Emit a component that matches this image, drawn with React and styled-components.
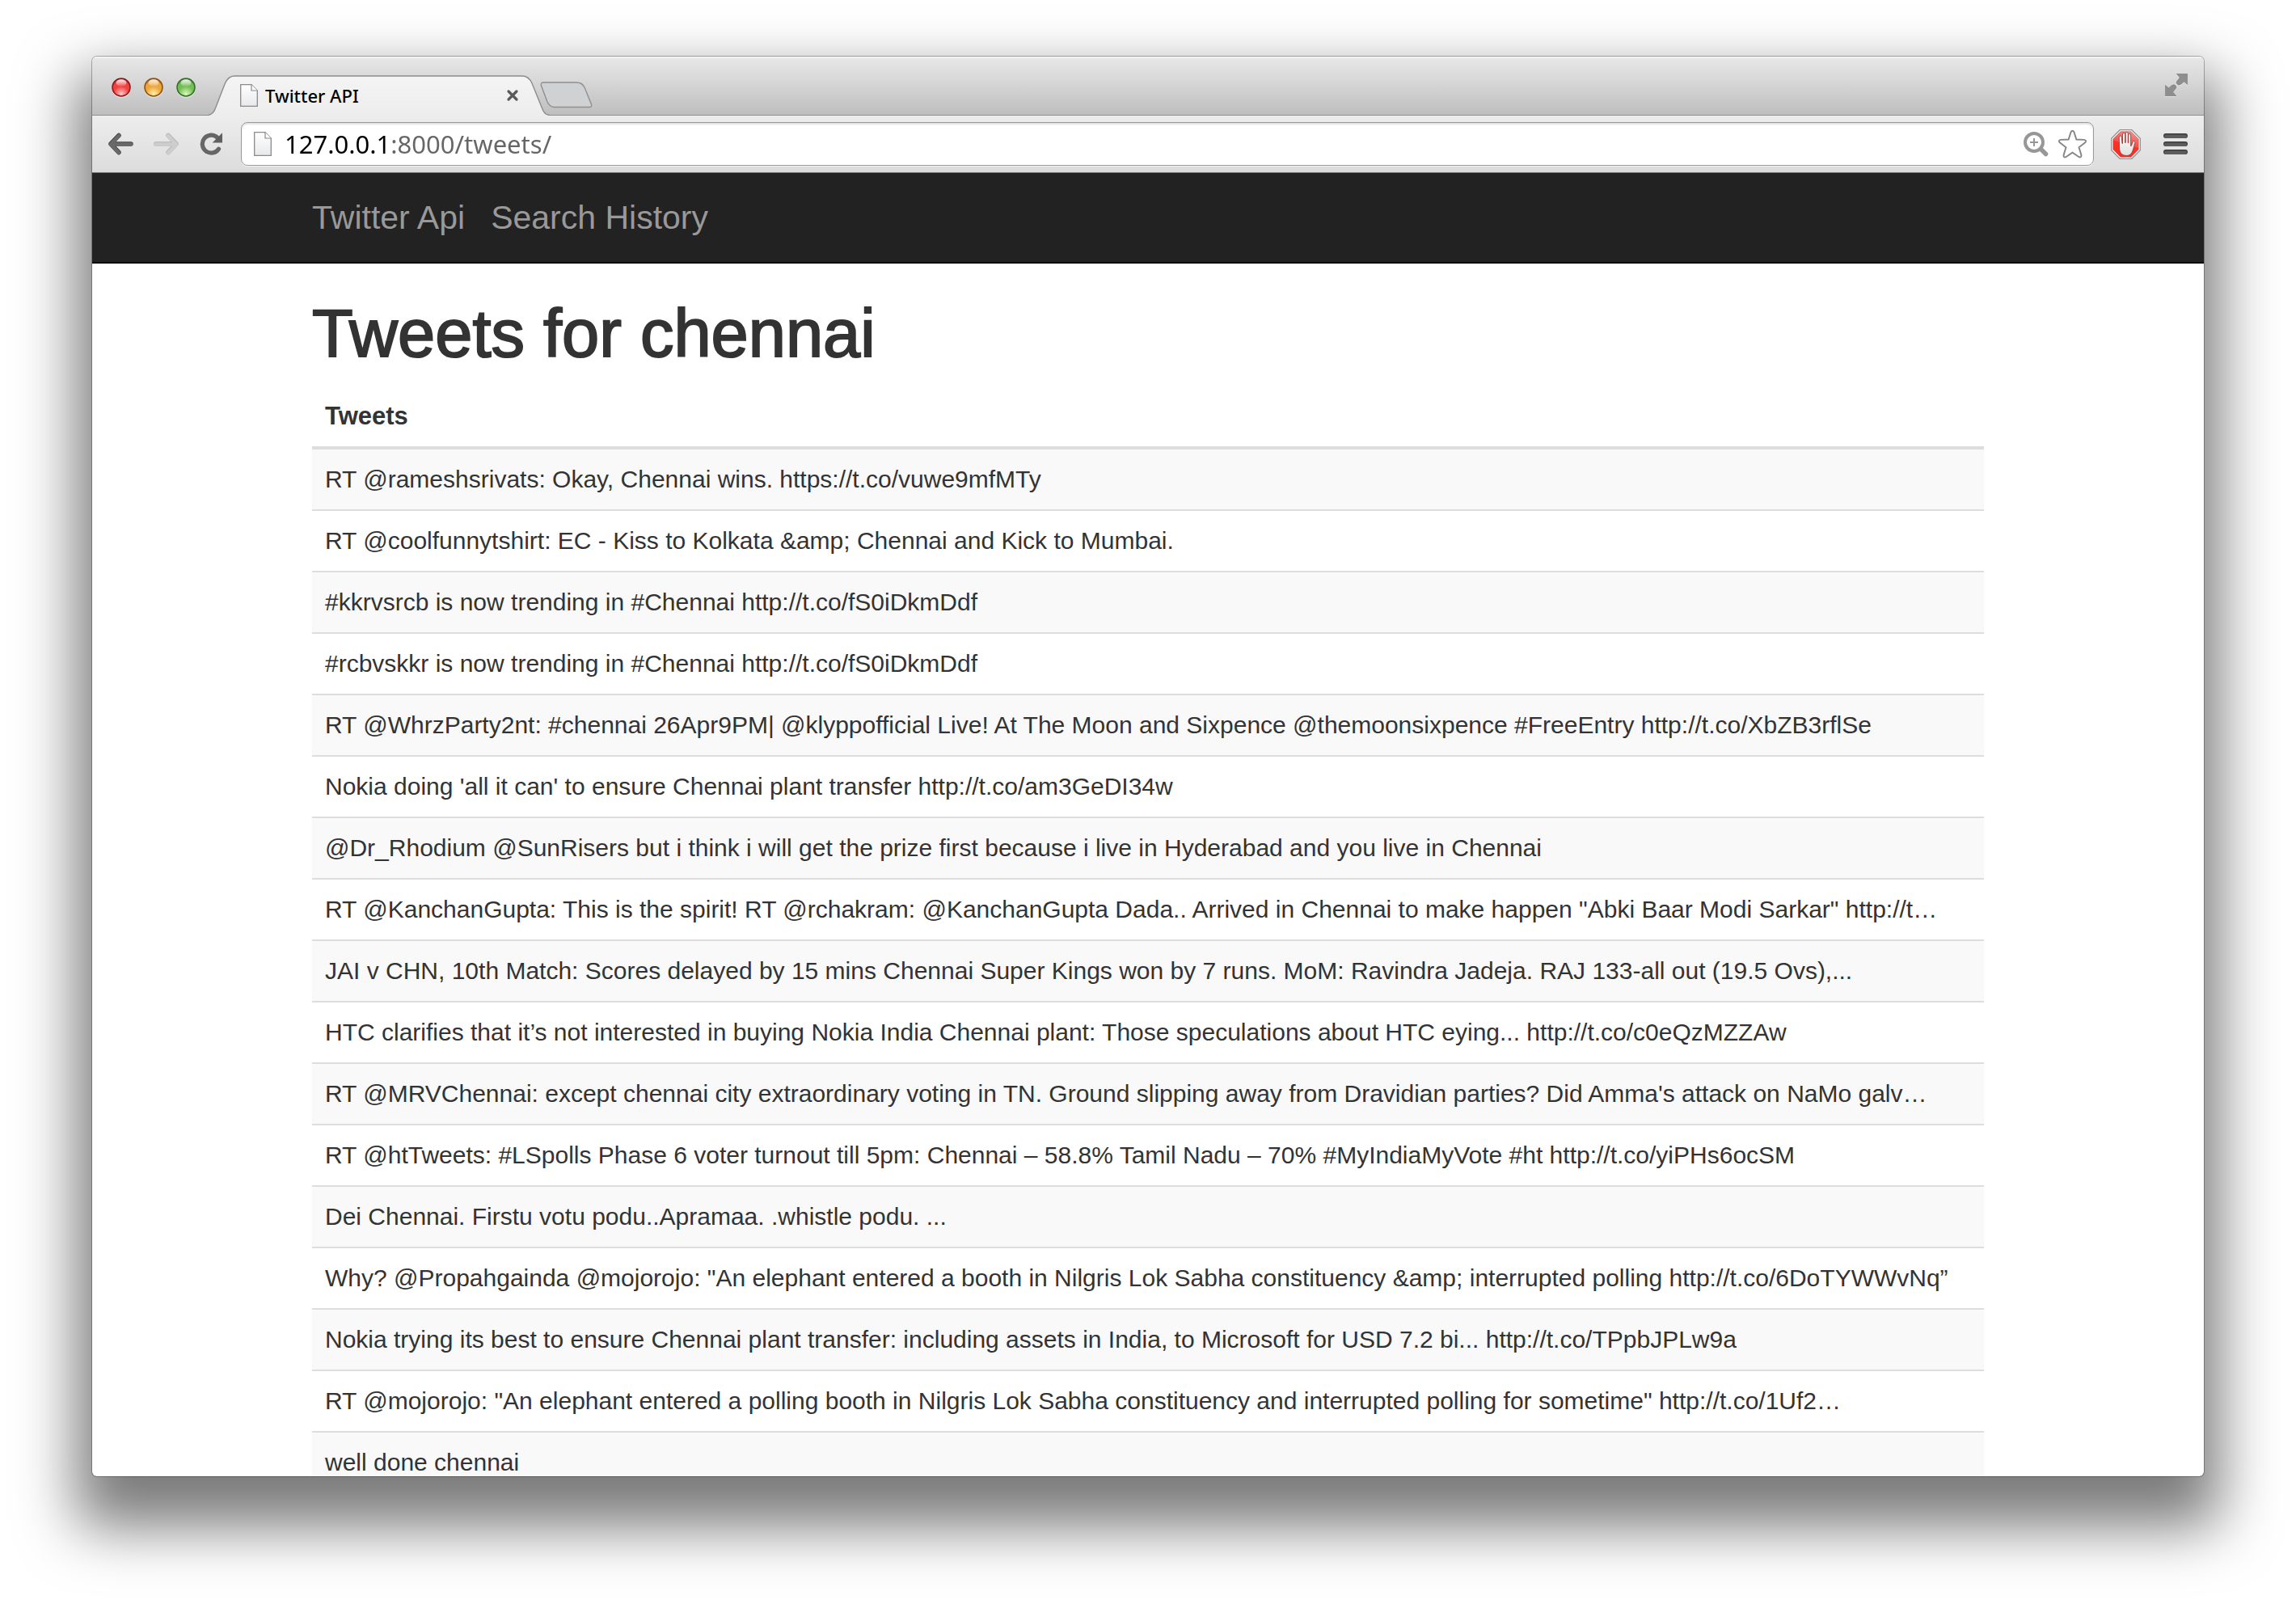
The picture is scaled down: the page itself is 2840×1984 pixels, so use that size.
import React from 'react';
import styled, { createGlobalStyle } from 'styled-components';

const GlobalStyle = createGlobalStyle`
  *, *::before, *::after { box-sizing: border-box; }
  body { margin: 0; background: #fff; }
  svg { display: block; }
`;

const sans = '"Helvetica Neue", "Liberation Sans", Arial, sans-serif';
const chromeFont = '"Noto Sans", "Open Sans", sans-serif';

const Desktop = styled.div`
  display: flex;
  height: 100vh;
  padding: 70px 114px 158px;
`;

const BrowserWindow = styled.div`
  flex: 1;
  min-width: 0;
  display: flex;
  flex-direction: column;
  overflow: hidden;
  border-radius: 6px;
  background: #fff;
  box-shadow: 0 0 0 1px rgba(0, 0, 0, 0.28), 0 43px 72px 20px rgba(0, 0, 0, 0.52);
`;

const TabStrip = styled.div`
  display: flex;
  align-items: flex-end;
  height: 73px;
  padding: 0 20px 0 24px;
  border-bottom: 1px solid #8f8f8f;
  background: linear-gradient(#e8e8e8, #d4d4d4 50%, #bebebe);
  box-shadow: inset 0 2px 0 #f2f2f2;
`;

const WindowButtons = styled.div`
  display: flex;
  gap: 16px;
  margin: 0 16px 20px 0;
`;

const IconButton = styled.button`
  display: flex;
  align-items: center;
  justify-content: center;
  padding: 0;
  border: 0;
  background: none;
`;

const Tab = styled.div`
  position: relative;
  display: flex;
  align-items: center;
  width: 422px;
  height: 50px;
  margin-bottom: -1px;
  padding: 0 38px 0 39px;
`;

const TabShape = styled.svg`
  position: absolute;
  inset: 0;
`;

const TabTitle = styled.span`
  position: relative;
  flex: 1;
  margin-left: 9px;
  font: 500 22px/32px ${chromeFont};
  color: #000;
`;

const TabIcon = styled.span`
  position: relative;
`;

const NewTab = styled(IconButton)`
  margin: 0 0 8px -12px;
`;

const FullScreen = styled(IconButton)`
  margin: 0 0 22px auto;
`;

const Toolbar = styled.div`
  display: flex;
  align-items: center;
  height: 71px;
  padding: 0 20px;
  border-bottom: 1px solid #777;
  background: linear-gradient(#ededed, #dcdcdc);
`;

const NavButtons = styled.div`
  display: flex;
  gap: 24px;
  margin-right: 20px;
`;

const AddressBar = styled.form`
  flex: 1;
  display: flex;
  align-items: center;
  height: 54px;
  padding: 0 8px 0 15px;
  border: 1px solid #9a9a9a;
  border-radius: 8px;
  background: #fff;
  box-shadow: inset 0 2px 2px rgba(0, 0, 0, 0.12), 0 1px 0 #f4f4f4;
`;

const AddressInput = styled.input`
  flex: 1;
  min-width: 0;
  height: 44px;
  margin-left: 16px;
  padding: 0;
  border: 0;
  outline: 0;
  font: 31px/44px ${chromeFont};
  background: linear-gradient(90deg, #000 132px, #666 132px);
  background-clip: text;
  -webkit-text-fill-color: transparent;
`;

const AddressActions = styled.div`
  display: flex;
  align-items: center;
  gap: 12px;
`;

const Extensions = styled.div`
  display: flex;
  align-items: center;
  gap: 28px;
  margin-left: 21px;
`;

const Page = styled.div`
  flex: 1;
  min-height: 0;
  overflow: hidden;
  font-family: ${sans};
  color: #333;
`;

const Navbar = styled.nav`
  height: 112px;
  padding: 0 272px;
  display: flex;
  align-items: center;
  gap: 32px;
  border-bottom: 2px solid #080808;
  background: #222;
`;

const NavLink = styled.a`
  font-size: 41px;
  line-height: 44px;
  color: #999;
  text-decoration: none;
`;

const Content = styled.main`
  padding: 0 272px;
`;

const Title = styled.h1`
  margin: 0;
  padding: 43px 0 21px;
  font-size: 83px;
  line-height: 88px;
  font-weight: 400;
  -webkit-text-stroke: 2px #333;
`;

const TweetTable = styled.table`
  width: 100%;
  border-collapse: separate;
  border-spacing: 0;
  font-size: 30px;
  line-height: 42px;
`;

const HeaderCell = styled.th`
  padding: 16px;
  border-bottom: 4px solid #ddd;
  text-align: left;
  font-size: 31px;
  font-weight: 700;
`;

const TweetRow = styled.tr`
  &:nth-child(odd) { background: #f9f9f9; }
`;

const TweetCell = styled.td`
  padding: 16px;
  border-bottom: 2px solid #ddd;
`;

const tweets = [
  'RT @rameshsrivats: Okay, Chennai wins. https://t.co/vuwe9mfMTy',
  'RT @coolfunnytshirt: EC - Kiss to Kolkata &amp; Chennai and Kick to Mumbai.',
  '#kkrvsrcb is now trending in #Chennai http://t.co/fS0iDkmDdf',
  '#rcbvskkr is now trending in #Chennai http://t.co/fS0iDkmDdf',
  'RT @WhrzParty2nt: #chennai 26Apr9PM| @klyppofficial Live! At The Moon and Sixpence @themoonsixpence #FreeEntry http://t.co/XbZB3rflSe',
  "Nokia doing 'all it can' to ensure Chennai plant transfer http://t.co/am3GeDI34w",
  '@Dr_Rhodium @SunRisers but i think i will get the prize first because i live in Hyderabad and you live in Chennai',
  'RT @KanchanGupta: This is the spirit! RT @rchakram: @KanchanGupta Dada.. Arrived in Chennai to make happen "Abki Baar Modi Sarkar" http://t…',
  'JAI v CHN, 10th Match: Scores delayed by 15 mins Chennai Super Kings won by 7 runs. MoM: Ravindra Jadeja. RAJ 133-all out (19.5 Ovs),...',
  'HTC clarifies that it’s not interested in buying Nokia India Chennai plant: Those speculations about HTC eying... http://t.co/c0eQzMZZAw',
  "RT @MRVChennai: except chennai city extraordinary voting in TN. Ground slipping away from Dravidian parties? Did Amma's attack on NaMo galv…",
  'RT @htTweets: #LSpolls Phase 6 voter turnout till 5pm: Chennai – 58.8% Tamil Nadu – 70% #MyIndiaMyVote #ht http://t.co/yiPHs6ocSM',
  'Dei Chennai. Firstu votu podu..Apramaa. .whistle podu. ...',
  'Why? @Propahgainda @mojorojo: "An elephant entered a booth in Nilgris Lok Sabha constituency &amp; interrupted polling http://t.co/6DoTYWWvNq”',
  'Nokia trying its best to ensure Chennai plant transfer: including assets in India, to Microsoft for USD 7.2 bi... http://t.co/TPpbJPLw9a',
  'RT @mojorojo: "An elephant entered a polling booth in Nilgris Lok Sabha constituency and interrupted polling for sometime" http://t.co/1Uf2…',
  'well done chennai',
];

const lights = [
  { name: 'Close window', edge: '#8e1a1c', mid: '#f0403f', glow: '#ffc9c9' },
  { name: 'Minimize window', edge: '#8f5410', mid: '#eda53c', glow: '#fff3ab' },
  { name: 'Zoom window', edge: '#35702a', mid: '#74bd55', glow: '#dcf8bd' },
];

function Light({ name, edge, mid, glow }) {
  const id = name.split(' ')[0];
  return (
    <IconButton type="button" aria-label={name}>
      <svg width="24" height="26" viewBox="0 0 24 26">
        <defs>
          <radialGradient id={id} cx="0.5" cy="0.88" r="0.88">
            <stop offset="0" stopColor={glow} />
            <stop offset="0.5" stopColor={mid} />
            <stop offset="0.75" stopColor={mid} />
            <stop offset="1" stopColor={edge} />
          </radialGradient>
          <linearGradient id={id + 'Shine'} x1="0" y1="0" x2="0" y2="1">
            <stop offset="0" stopColor="#fff" stopOpacity="0.95" />
            <stop offset="1" stopColor="#fff" stopOpacity="0.1" />
          </linearGradient>
        </defs>
        <circle cx="12" cy="13" r="12" fill="#fff" opacity="0.45" />
        <circle cx="12" cy="12" r="11" fill={`url(#${id})`} stroke={edge} strokeWidth="1.6" />
        <ellipse cx="12" cy="6.5" rx="6.5" ry="4.2" fill={`url(#${id}Shine)`} />
      </svg>
    </IconButton>
  );
}

function PageIcon({ height }) {
  return (
    <svg width="22" height={height} viewBox={`0 0 22 ${height}`}>
      <defs>
        <linearGradient id="sheet" x1="0" y1="0" x2="0" y2="1">
          <stop offset="0" stopColor="#fff" />
          <stop offset="1" stopColor="#e8e9ec" />
        </linearGradient>
      </defs>
      <path d={`M.7 .7H14L21.3 8V${height - 0.7}H.7Z`} fill="url(#sheet)" stroke="#8a8a8a" strokeWidth="1.3" />
      <path d="M14 .7V8H21.3" fill="#fff" stroke="#8a8a8a" strokeWidth="1.2" />
    </svg>
  );
}

function ArrowIcon({ forward }) {
  return (
    <svg width="32" height="28" viewBox="0 0 32 28" fill="none" strokeLinecap="round" strokeLinejoin="round">
      <g transform={forward ? 'translate(31 0) scale(-1 1)' : undefined}>
        <path d="M3 14H28M13 3.500L3 14L13 24.500" stroke={forward ? '#b4b4b4' : '#444'} strokeWidth="5.5" />
        <path d="M3 14.500H28M13 4L3 14.500L13 25" stroke={forward ? '#cdcdcd' : '#696969'} strokeWidth="4.5" />
      </g>
    </svg>
  );
}

function ReloadIcon() {
  return (
    <svg width="32" height="28" viewBox="0 0 32 28">
      <path d="M24.500 20.2A11 11 0 1 1 22.700 6" fill="none" stroke="#666" strokeWidth="5.2" strokeLinecap="round" />
      <path d="M29 .3V12.6H16.7Z" fill="#606060" />
    </svg>
  );
}

function ZoomIcon() {
  return (
    <svg width="31" height="31" viewBox="0 0 31 31" fill="none" stroke="#979797">
      <circle cx="13" cy="13" r="11" strokeWidth="4" />
      <path d="M21.5 21.5L27.5 27.5" strokeWidth="5.5" strokeLinecap="round" />
      <path d="M13 8V18M8 13H18" strokeWidth="2" />
    </svg>
  );
}

function StarIcon() {
  return (
    <svg width="35" height="35" viewBox="0 0 35 35">
      <path
        d="M15.6 2.2Q17.5-.5 19.4 2.2L22.4 11.5L32 11.9Q35.500 12.500 33.200 15.200L25.500 21.300L28.400 30.800Q28.800 34.200 25.600 33.200L17.500 27.700L9.400 33.200Q6.200 34.200 6.600 30.800L9.500 21.300L1.800 15.200Q-.500 12.500 3 11.900L12.600 11.500Z"
        fill="#fff"
        stroke="#858585"
        strokeWidth="1.900"
      />
    </svg>
  );
}

function StopHandIcon() {
  return (
    <svg width="37" height="37" viewBox="0 0 37 37">
      <defs>
        <linearGradient id="stopRed" x1="0.7" y1="0" x2="0.4" y2="1">
          <stop offset="0" stopColor="#f48f8a" />
          <stop offset="0.5" stopColor="#f0524b" />
          <stop offset="0.52" stopColor="#f5342b" />
          <stop offset="1" stopColor="#fb2a1c" />
        </linearGradient>
        <linearGradient id="palm" x1="0" y1="0" x2="0" y2="1">
          <stop offset="0" stopColor="#fff" />
          <stop offset="1" stopColor="#e0e0e0" />
        </linearGradient>
      </defs>
      <path d="M11.200 .7H25.800L36.300 11.200V25.800L25.800 36.300H11.200L.7 25.800V11.200Z" fill="#fff" stroke="#909090" strokeWidth="1.300" />
      <path d="M12 2.800H25L34.200 12V25L25 34.200H12L2.800 25V12Z" fill="url(#stopRed)" stroke="#c9443e" strokeWidth=".6" />
      <path
        d="M10.200 10Q10.200 8 11.700 8T13.300 10L14 17.500H14.500V6Q14.500 4.300 16 4.300T17.600 6V16.500H18.200V5Q18.200 3.400 19.700 3.400T21.200 5V16.700H21.800V7Q21.800 5.400 23.200 5.400T24.600 7V20.500Q25.200 21 25.700 19.500L27 15.500Q27.700 14 29 14.500T29.900 16.500L27.500 25Q25.500 32.500 19.500 32.500Q12 32.500 10.600 25Z"
        fill="url(#palm)"
        stroke="#a33a36"
        strokeWidth=".9"
      />
    </svg>
  );
}

function MenuIcon() {
  return (
    <svg width="30" height="27" viewBox="0 0 30 27">
      {[0, 10, 20].map((y) => (
        <g key={y}>
          <rect y={y} width="30" height="6" rx="3" fill="#3c3c3c" />
          <rect x="1" y={y + 1.5} width="28" height="4.500" rx="2.200" fill="#5c5c5c" />
        </g>
      ))}
    </svg>
  );
}

function FullScreenIcon() {
  return (
    <svg width="28" height="29" viewBox="0 0 28 29">
      <g fill="#f0f0f0" transform="translate(0 1)">
        <path d="M28 0V14L23.500 10L20 13Q16.500 15.500 14.500 12.500Q13.500 10 16 8L18.300 5L14 0Z" />
        <path d="M0 28V14L4.500 18L8 15Q11.500 12.500 13.500 15.500Q14.500 18 12 20L9.700 23L14 28Z" />
      </g>
      <g fill="#8e8e8e" stroke="#747474" strokeWidth=".6">
        <path d="M27.700 .3V13.500L23.500 10L20 13Q16.500 15.500 14.500 12.500Q13.500 10 16 8L18.300 5L14.300 .3Z" />
        <path d="M.3 27.700V14.500L4.500 18L8 15Q11.500 12.500 13.500 15.500Q14.500 18 12 20L9.700 23L13.700 27.700Z" />
      </g>
    </svg>
  );
}

export default function App() {
  return (
    <>
      <GlobalStyle />
      <Desktop>
        <BrowserWindow>
          <TabStrip>
            <WindowButtons>
              {lights.map((light) => (
                <Light key={light.name} {...light} />
              ))}
            </WindowButtons>
            <Tab>
              <TabShape width="422" height="50" viewBox="0 0 422 50" aria-hidden="true">
                <defs>
                  <linearGradient id="tabFill" x1="0" y1="0" x2="0" y2="1">
                    <stop offset="0" stopColor="#f4f4f4" />
                    <stop offset="1" stopColor="#ededed" />
                  </linearGradient>
                </defs>
                <path
                  d="M0 50V49.500Q5 49 8 42L20 11Q24 1 32 1H388Q396 1 400 10L413 42Q416 49 421 49.500V50Z"
                  fill="url(#tabFill)"
                />
                <path
                  d="M-4 49.500Q5 50 8 42L20 11Q24 1 32 1H388Q396 1 400 10L413 42Q416 50 424 49.500"
                  fill="none"
                  stroke="#8c8c8c"
                  strokeWidth="1.400"
                />
              </TabShape>
              <TabIcon>
                <PageIcon height={28} />
              </TabIcon>
              <TabTitle>Twitter API</TabTitle>
              <TabIcon>
                <IconButton type="button" aria-label="Close tab">
                  <svg width="16" height="16" viewBox="0 0 16 16">
                    <path d="M3 3L13 13M13 3L3 13" stroke="#5a5a5a" strokeWidth="3.200" strokeLinecap="round" />
                  </svg>
                </IconButton>
              </TabIcon>
            </Tab>
            <NewTab type="button" aria-label="New tab">
              <svg width="65" height="33" viewBox="0 0 65 33">
                <path
                  d="M4 1H45Q52 1 55 7L63.500 28Q64.500 31.500 61 31.500H18Q12 31.500 9 25L1.500 5Q.500 1 4 1Z"
                  fill="#d0d1d3"
                  stroke="#8f8f8f"
                  strokeWidth="1.400"
                />
              </svg>
            </NewTab>
            <FullScreen type="button" aria-label="Enter full screen">
              <FullScreenIcon />
            </FullScreen>
          </TabStrip>

          <Toolbar>
            <NavButtons>
              <IconButton type="button" aria-label="Back">
                <ArrowIcon />
              </IconButton>
              <IconButton type="button" aria-label="Forward" disabled>
                <ArrowIcon forward />
              </IconButton>
              <IconButton type="button" aria-label="Reload">
                <ReloadIcon />
              </IconButton>
            </NavButtons>
            <AddressBar onSubmit={(event) => event.preventDefault()}>
              <PageIcon height={30} />
              <AddressInput type="text" aria-label="Address" defaultValue="127.0.0.1:8000/tweets/" />
              <AddressActions>
                <IconButton type="button" aria-label="Page zoom">
                  <ZoomIcon />
                </IconButton>
                <IconButton type="button" aria-label="Bookmark this page">
                  <StarIcon />
                </IconButton>
              </AddressActions>
            </AddressBar>
            <Extensions>
              <IconButton type="button" aria-label="Ad blocker">
                <StopHandIcon />
              </IconButton>
              <IconButton type="button" aria-label="Menu">
                <MenuIcon />
              </IconButton>
            </Extensions>
          </Toolbar>

          <Page>
            <Navbar>
              <NavLink href="#home">Twitter Api</NavLink>
              <NavLink href="#history">Search History</NavLink>
            </Navbar>
            <Content>
              <Title>Tweets for chennai</Title>
              <TweetTable>
                <thead>
                  <tr>
                    <HeaderCell scope="col">Tweets</HeaderCell>
                  </tr>
                </thead>
                <tbody>
                  {tweets.map((tweet) => (
                    <TweetRow key={tweet}>
                      <TweetCell>{tweet}</TweetCell>
                    </TweetRow>
                  ))}
                </tbody>
              </TweetTable>
            </Content>
          </Page>
        </BrowserWindow>
      </Desktop>
    </>
  );
}
